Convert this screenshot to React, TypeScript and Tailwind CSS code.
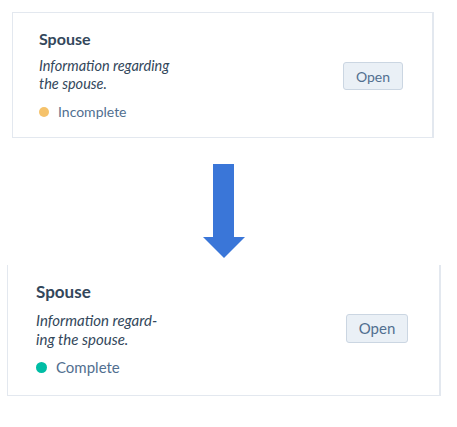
import React from 'react';

type Status = 'incomplete' | 'complete';

export default function App() {
  return (
    <main className="relative h-[427px] w-[457px] bg-white font-['Lato',sans-serif] text-[#33475b]">
      <div className="pl-[12px] pt-[12px]">
        <SectionCard
          className="h-[126px] w-[422px] border-t pl-[26px] pr-[29px] pt-[18px]"
          lines={['Information regarding', 'the spouse.']}
          status="incomplete"
        />
      </div>

      <div className="flex justify-center pr-[9px] pt-[26px]">
        <svg width="42" height="94" viewBox="0 0 42 94" className="block">
          <path d="M10 0 H31 V73 H42 L21 94 L0 73 H10 Z" fill="#3a76d8" />
        </svg>
      </div>

      <div className="pl-[7px] pt-[7px]">
        <SectionCard
          className="h-[131px] w-[434px] pl-[28px] pr-[31px] pt-[18px] text-[15px]"
          lines={['Information regard-', 'ing the spouse.']}
          status="complete"
          big
        />
      </div>
    </main>
  );
}

function SectionCard({
  className,
  lines,
  status,
  big,
}: {
  className: string;
  lines: string[];
  status: Status;
  big?: boolean;
}) {
  return (
    <div
      className={`flex items-start justify-between border-b border-l border-r-2 border-[#e3e8ef] bg-white ${className}`}
    >
      <div>
        <h3 className={`font-bold leading-none ${big ? 'text-[17px]' : 'text-[16px]'}`}>Spouse</h3>
        <p
          className={`italic ${
            big ? 'mt-[11px] text-[15px] leading-[19px]' : 'mt-[10px] text-[14.5px] leading-[18px]'
          }`}
        >
          {lines[0]}
          <br />
          {lines[1]}
        </p>
        <div className={`flex items-center ${big ? 'mt-[7px] gap-[9px]' : 'mt-[8px] gap-[9px]'}`}>
          <span
            className={`rounded-full ${big ? 'h-[11px] w-[11px]' : 'h-[10px] w-[10px]'} ${
              status === 'complete' ? 'bg-[#00bda5]' : 'bg-[#f5c26b]'
            }`}
          />
          <span className={`text-[#516f90] ${big ? 'text-[15px]' : 'text-[14px]'}`}>
            {status === 'complete' ? 'Complete' : 'Incomplete'}
          </span>
        </div>
      </div>
      <button
        className={`rounded-[3px] border border-[#cbd6e2] bg-[#eaf0f6] text-[#516f90] ${
          big ? 'mt-[31px] h-[29px] w-[62px] text-[15px]' : 'mt-[31px] h-[28px] w-[60px] text-[14px]'
        }`}
      >
        Open
      </button>
    </div>
  );
}
